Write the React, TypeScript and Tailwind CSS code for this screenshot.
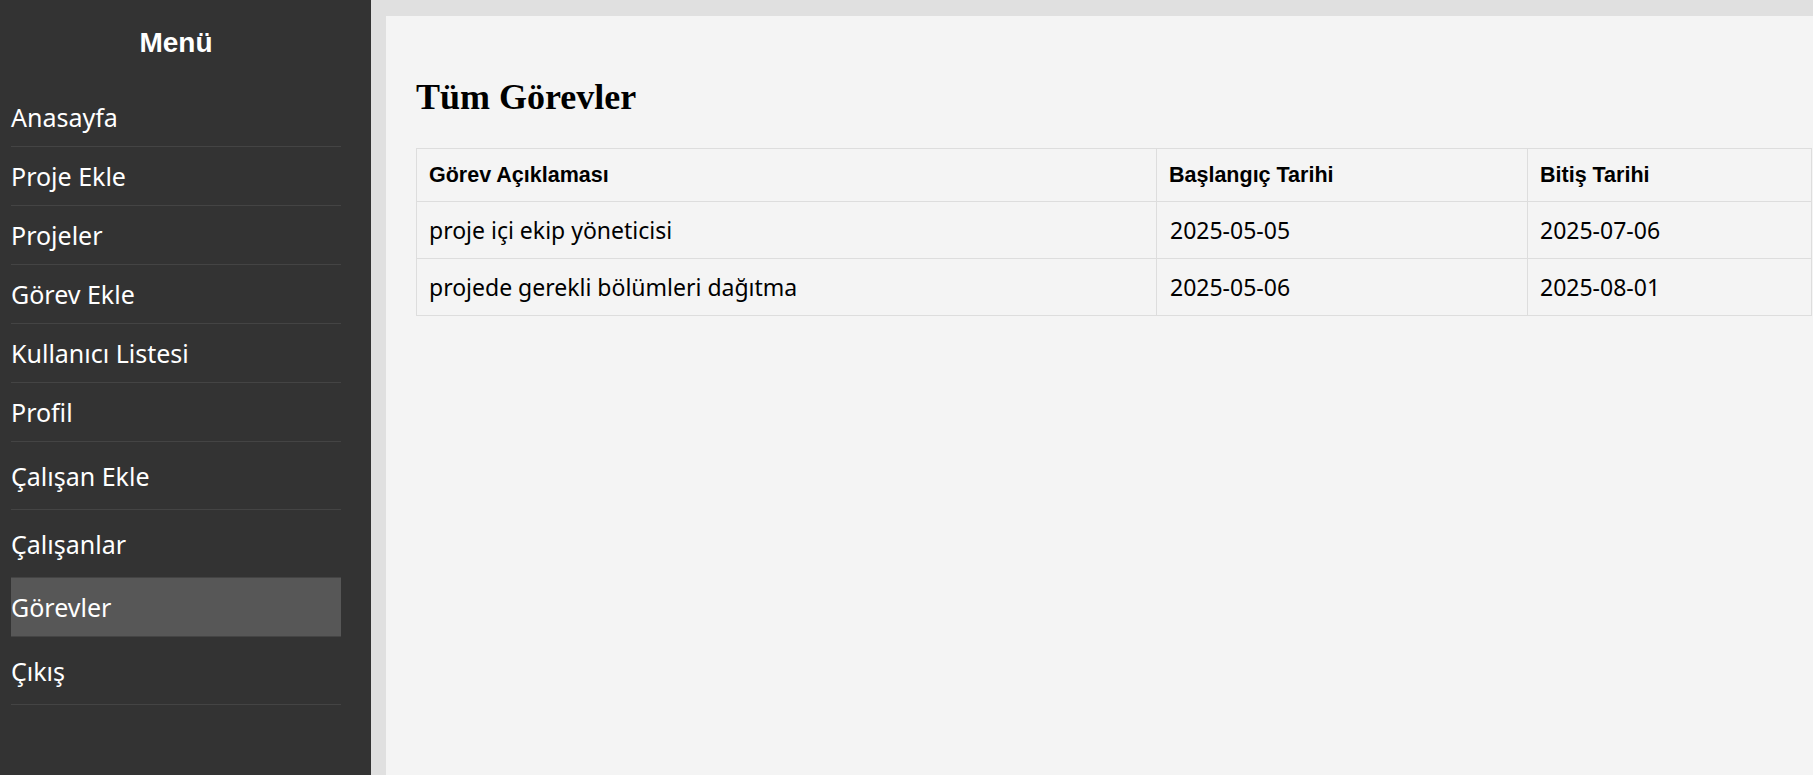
import React from 'react';

const menuItems = [
    { label: 'Anasayfa', tall: false },
    { label: 'Proje Ekle', tall: false },
    { label: 'Projeler', tall: false },
    { label: 'Görev Ekle', tall: false },
    { label: 'Kullanıcı Listesi', tall: false },
    { label: 'Profil', tall: false },
    { label: 'Çalışan Ekle', tall: true },
    { label: 'Çalışanlar', tall: true },
    { label: 'Görevler', tall: false, active: true },
    { label: 'Çıkış', tall: true },
];

const tasks = [
    { desc: 'proje içi ekip yöneticisi', start: '2025-05-05', end: '2025-07-06' },
    { desc: 'projede gerekli bölümleri dağıtma', start: '2025-05-06', end: '2025-08-01' },
];

function Sidebar() {
    return (
        <aside className="w-[371px] shrink-0 bg-[#333333] pl-[11px] pr-[30px] text-white">
            <h2 className="flex h-[86px] items-center justify-center font-['Liberation_Sans',Arial,sans-serif] text-[28px] font-bold leading-[28px]">
                Menü
            </h2>
            <ul className="mt-[2px] font-['Noto_Sans',sans-serif] text-[25px] leading-[30px]">
                {menuItems.map((item) => (
                    <li
                        key={item.label}
                        className={`flex items-center border-b border-[#444444] ${item.tall ? 'h-[68px]' : 'h-[59px]'} ${item.active ? 'bg-[#575757]' : ''}`}
                    >
                        {item.label}
                    </li>
                ))}
            </ul>
        </aside>
    );
}

export default function App() {
    return (
        <div className="flex h-[775px] overflow-hidden bg-[#e0e0e0]">
            <Sidebar />
            <main className="ml-[15px] mt-[16px] flex-1 bg-[#f4f4f4] pl-[30px] pt-[63px]">
                <h1 className="font-['Liberation_Serif','Times_New_Roman',serif] text-[36px] font-bold leading-[36px] text-black">
                    Tüm Görevler
                </h1>
                <table className="mt-[33px] w-[1396px] table-fixed border-collapse text-black">
                    <colgroup>
                        <col className="w-[740px]" />
                        <col className="w-[371px]" />
                        <col />
                    </colgroup>
                    <thead>
                        <tr className="h-[53px]">
                            {['Görev Açıklaması', 'Başlangıç Tarihi', 'Bitiş Tarihi'].map((h) => (
                                <th
                                    key={h}
                                    className="border border-[#dddddd] px-[12px] text-left font-['Liberation_Sans',Arial,sans-serif] text-[21.5px] font-bold"
                                >
                                    {h}
                                </th>
                            ))}
                        </tr>
                    </thead>
                    <tbody className="font-['Noto_Sans',sans-serif] text-[23px]">
                        {tasks.map((t) => (
                            <tr key={t.desc} className="h-[57px]">
                                <td className="border border-[#dddddd] px-[12px]">{t.desc}</td>
                                <td className="border border-[#dddddd] px-[13px]">{t.start}</td>
                                <td className="border border-[#dddddd] px-[12px]">{t.end}</td>
                            </tr>
                        ))}
                    </tbody>
                </table>
            </main>
        </div>
    );
}
